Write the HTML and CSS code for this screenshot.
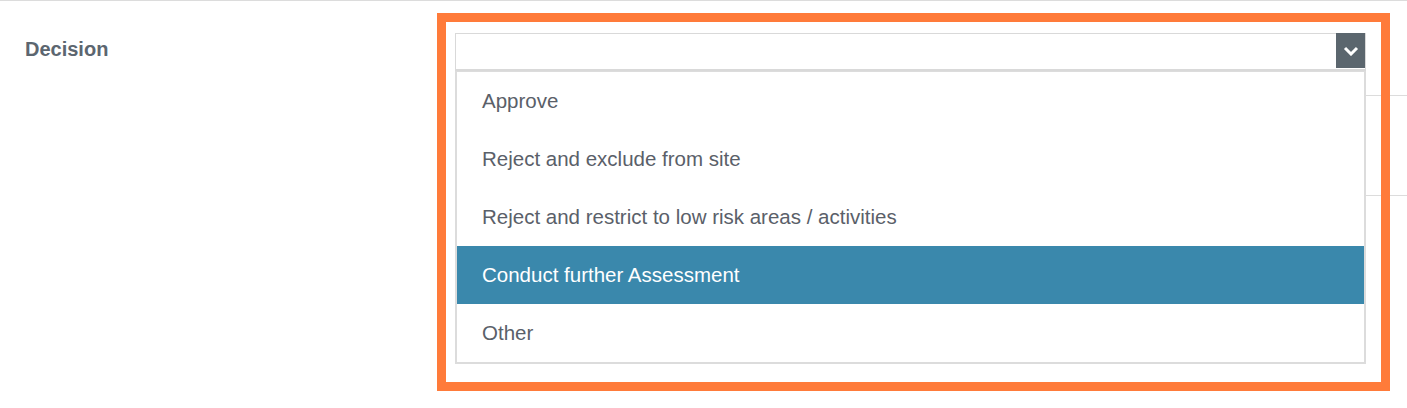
FILE: index.html
```html
<!DOCTYPE html>
<html lang="en">
<head>
    <meta charset="UTF-8">
    <title>Decision</title>
    <link rel="stylesheet" href="styles.css">
</head>
<body>
<div class="form">
    <div class="label">Decision</div>
    <div class="field">
        <div class="field-row first">
            <div class="select">
                <span class="arrow">
                    <svg width="16" height="10" viewBox="0 0 16 10">
                        <path d="M2 2 L8 8 L14 2" fill="none" stroke="#fff" stroke-width="3"/>
                    </svg>
                </span>
                <ul class="options">
                    <li>Approve</li>
                    <li>Reject and exclude from site</li>
                    <li>Reject and restrict to low risk areas / activities</li>
                    <li class="selected">Conduct further Assessment</li>
                    <li>Other</li>
                </ul>
            </div>
        </div>
        <div class="field-row second"></div>
    </div>
</div>
<!-- annotation frame -->
<div class="highlight"></div>
</body>
</html>
```

FILE: styles.css
```css
*{
    margin: 0;
    padding: 0;
    box-sizing: border-box;
}
body{
    font-family: "Liberation Sans", Arial, sans-serif;
    background: #fff;
    height: 408px;
    overflow: hidden;
}
.form{
    display: flex;
    border-top: 1px solid #dcdcdc;
}
.label{
    width: 455px;
    padding: 36px 0 0 25px;
    font-size: 20px;
    line-height: 24px;
    font-weight: bold;
    color: #5c6670;
}
.field{
    flex: 1;
}
.field-row{
    border-bottom: 1px solid #dcdcdc;
}
.field-row.first{
    height: 95px;
    padding: 32px 41px 0 0;
}
.field-row.second{
    height: 100px;
}
.select{
    position: relative;
    height: 38px;
    border: 1px solid #d9d9d9;
    border-bottom-width: 2px;
    background: #fff;
}
.arrow{
    position: absolute;
    top: -1px;
    right: 0;
    width: 29px;
    height: 35px;
    background: #5b666e;
    display: flex;
    align-items: center;
    justify-content: center;
}
.options{
    list-style: none;
    position: absolute;
    top: calc(100% + 2px);
    left: -1px;
    right: -1px;
    background: #fff;
    border: 2px solid #dcdcdc;
    border-top: 1px solid #dcdcdc;
    z-index: 2;
}
.options>li{
    height: 58px;
    line-height: 58px;
    padding-left: 25px;
    font-size: 20.5px;
    color: #5a6069;
}
.options .selected{
    background: #3a88ac;
    color: #fff;
}
.highlight{
    position: absolute;
    left: 437px;
    top: 13px;
    width: 953px;
    height: 378px;
    border: 9px solid #ff7b3a;
    pointer-events: none;
    z-index: 3;
}
```
